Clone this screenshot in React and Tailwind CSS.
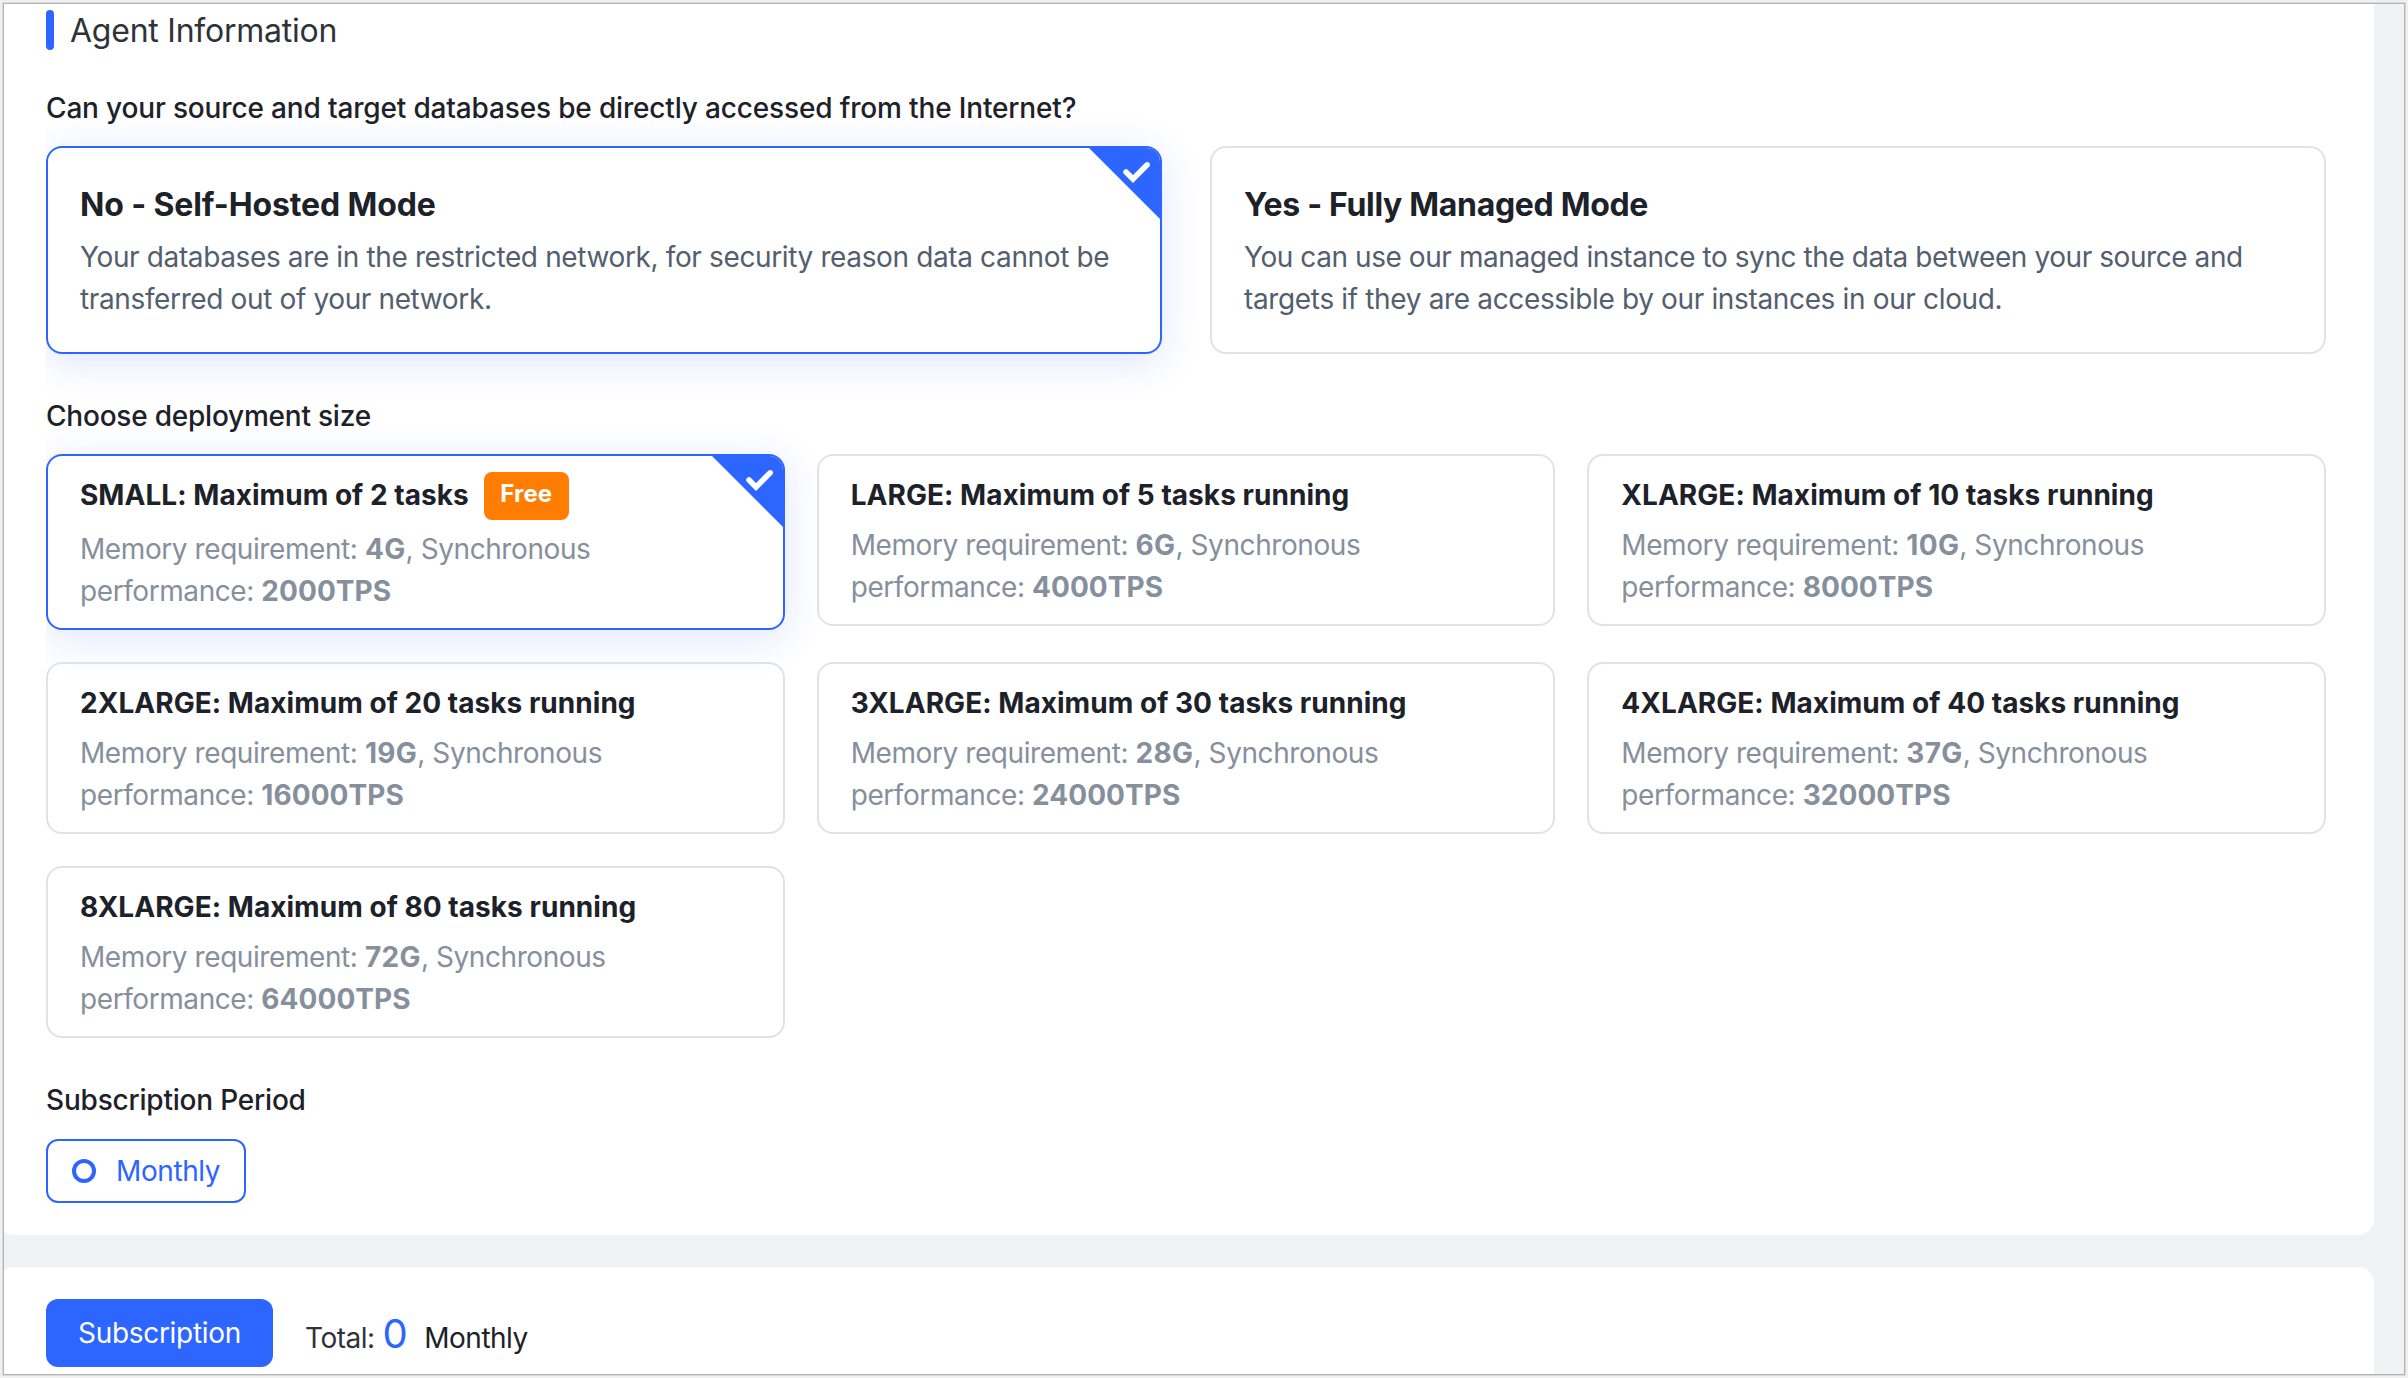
import React from "react";

const MODES = [
  {
    title: "No - Self-Hosted Mode",
    titleClass: "tracking-[-0.12px]",
    lineClasses: ["tracking-[-0.37px]", "tracking-[-0.37px]"],
    lines: [
      "Your databases are in the restricted network, for security reason data cannot be",
      "transferred out of your network.",
    ],
    selected: true,
  },
  {
    title: "Yes - Fully Managed Mode",
    titleClass: "tracking-[-0.32px]",
    lineClasses: ["tracking-[-0.43px]", "tracking-[-0.35px]"],
    lines: [
      "You can use our managed instance to sync the data between your source and",
      "targets if they are accessible by our instances in our cloud.",
    ],
  },
];

const SIZES = [
  { title: "SMALL: Maximum of 2 tasks", memory: "4G", tps: "2000TPS", free: true, selected: true },
  { title: "LARGE: Maximum of 5 tasks running", memory: "6G", tps: "4000TPS" },
  { title: "XLARGE: Maximum of 10 tasks running", memory: "10G", tps: "8000TPS" },
  { title: "2XLARGE: Maximum of 20 tasks running", memory: "19G", tps: "16000TPS" },
  { title: "3XLARGE: Maximum of 30 tasks running", memory: "28G", tps: "24000TPS" },
  { title: "4XLARGE: Maximum of 40 tasks running", memory: "37G", tps: "32000TPS" },
  { title: "8XLARGE: Maximum of 80 tasks running", memory: "72G", tps: "64000TPS" },
];

function SelectedCorner() {
  return (
    <svg className="absolute -top-px -right-px h-[73px] w-[73px]" viewBox="0 0 73 73" fill="none">
      <path d="M0 0H73V73Z" fill="#2c65ff" />
      <path d="M38 25L45 32L59.2 17.8" stroke="#fff" strokeWidth="5.5" strokeLinecap="round" />
    </svg>
  );
}

function Card({ selected, className, children }) {
  const tone = selected
    ? "border-[#2c65ff] shadow-[0_8px_40px_rgba(44,75,255,0.15)]"
    : "border-[#dfe3e8]";
  return (
    <div className={`relative overflow-hidden rounded-2xl border-2 px-8 ${tone} ${className}`}>
      {selected && <SelectedCorner />}
      {children}
    </div>
  );
}

function Label({ children, className }) {
  return <h3 className={`text-[28px] leading-[42px] font-medium text-[#1d2129] ${className}`}>{children}</h3>;
}

export default function App() {
  return (
    <div className="h-[1378px] w-[2408px] overflow-hidden bg-[#f0f0f0] p-1 font-['Inter',sans-serif]">
      <div className="h-[1370px] w-[2400px] bg-[#f1f2f4] shadow-[0_0_0_1px_#b4b4b4,0_0_0_2px_#dadada]">
        <div className="flex h-full flex-col gap-8 overflow-hidden">
          <section className="-ml-1.5 h-[1231px] w-[2376px] shrink-0 rounded-b-2xl bg-white pt-1.5 pr-12 pl-12">
            <header className="flex h-10 items-center gap-4">
              <span className="h-10 w-2 rounded bg-[#2c65ff]" />
              <h2 className="pt-0.5 text-[32px] leading-10 tracking-[-0.24px] text-[#2f3238]">Agent Information</h2>
            </header>

            <Label className="mt-[37px] tracking-[-0.16px]">
              Can your source and target databases be directly accessed from the Internet?
            </Label>
            <div className="mt-[17px] grid grid-cols-2 gap-12 [clip-path:inset(-60px_-60px_-60px_0)]">
              {MODES.map((mode) => (
                <Card key={mode.title} selected={mode.selected} className="pt-[33px] pb-8">
                  <h4 className={`text-[32px] leading-[48px] font-bold text-[#1d2129] ${mode.titleClass}`}>
                    {mode.title}
                  </h4>
                  <p className="mt-[7px] text-[28px] leading-[42px] whitespace-nowrap text-[#535e6e]">
                    <span className={mode.lineClasses[0]}>{mode.lines[0]}</span>
                    <br />
                    <span className={mode.lineClasses[1]}>{mode.lines[1]}</span>
                  </p>
                </Card>
              ))}
            </div>

            <Label className="mt-[41px] tracking-[-0.22px]">Choose deployment size</Label>
            <div className="mt-[17px] grid grid-cols-3 items-start gap-8 [clip-path:inset(-60px_-60px_-60px_0)]">
              {SIZES.map((size) => (
                <Card key={size.title} selected={size.selected} className="py-4">
                  <div className="flex items-start gap-[15px]">
                    <h4 className="pt-0.5 text-[28px] leading-[42px] font-bold tracking-[0.04px] text-[#1d2129]">
                      {size.title}
                    </h4>
                    {size.free && (
                      <span className="h-12 w-[85px] rounded-lg bg-[#ff7d00] text-center text-[24px] leading-[44px] font-bold tracking-[0.2px] text-white">
                        Free
                      </span>
                    )}
                  </div>
                  <p className="mt-2 text-[28px] leading-[42px] tracking-[-0.42px] text-[#86909c]">
                    Memory requirement: <b className="tracking-[0.35px]">{size.memory}</b>, Synchronous
                    <br />
                    performance: <b className="tracking-[0.05px]">{size.tps}</b>
                  </p>
                </Card>
              ))}
            </div>

            <Label className="mt-[41px] tracking-[-0.2px]">Subscription Period</Label>
            <button className="mt-[18px] flex h-16 w-[200px] items-center rounded-xl border-2 border-[#2c65ff] pl-6 text-[28px] tracking-[-0.4px] text-[#2c65ff]">
              <span className="mr-5 h-6 w-6 rounded-full border-4 border-[#2c65ff]" />
              Monthly
            </button>
          </section>

          <section className="-ml-1.5 flex h-[140px] w-[2376px] shrink-0 items-start rounded-t-2xl bg-white pt-8 pl-12">
            <button className="h-[68px] w-[227px] rounded-xl bg-[#2c65ff] text-[28px] tracking-[-0.3px] text-white">
              Subscription
            </button>
            <div className="mt-3.5 ml-8 flex items-baseline text-[28px] leading-[42px] tracking-[-0.5px]">
              <span className="text-[#2f3238]">Total:</span>
              <span className="ml-2 text-[40px] text-[#2c65ff]">0</span>
              <span className="ml-[17px] text-[#1d2129]">Monthly</span>
            </div>
          </section>
        </div>
      </div>
    </div>
  );
}
